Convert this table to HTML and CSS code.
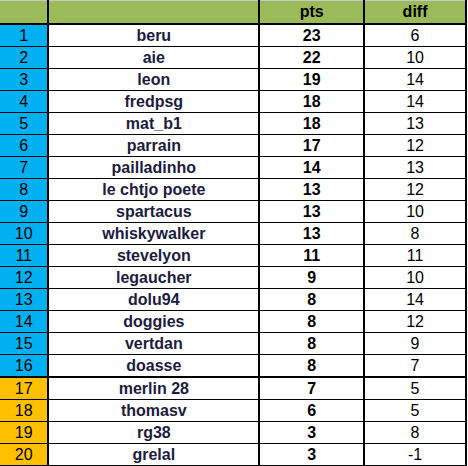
FILE: index.html
```html
<!DOCTYPE html>
<html>
<head>
<meta charset="utf-8">
<link rel="stylesheet" href="styles.css">
</head>
<body>
<table class="standings">
<thead>
<tr><th class="rank"></th><th class="name"></th><th class="pts">pts</th><th class="diff">diff</th></tr>
</thead>
<tbody>
<tr class="blue"><td class="rank">1</td><td class="name">beru</td><td class="pts">23</td><td class="diff">6</td></tr>
<tr class="blue"><td class="rank">2</td><td class="name">aie</td><td class="pts">22</td><td class="diff">10</td></tr>
<tr class="blue"><td class="rank">3</td><td class="name">leon</td><td class="pts">19</td><td class="diff">14</td></tr>
<tr class="blue"><td class="rank">4</td><td class="name">fredpsg</td><td class="pts">18</td><td class="diff">14</td></tr>
<tr class="blue"><td class="rank">5</td><td class="name">mat_b1</td><td class="pts">18</td><td class="diff">13</td></tr>
<tr class="blue"><td class="rank">6</td><td class="name">parrain</td><td class="pts">17</td><td class="diff">12</td></tr>
<tr class="blue"><td class="rank">7</td><td class="name">pailladinho</td><td class="pts">14</td><td class="diff">13</td></tr>
<tr class="blue"><td class="rank">8</td><td class="name">le chtjo poete</td><td class="pts">13</td><td class="diff">12</td></tr>
<tr class="blue"><td class="rank">9</td><td class="name">spartacus</td><td class="pts">13</td><td class="diff">10</td></tr>
<tr class="blue"><td class="rank">10</td><td class="name">whiskywalker</td><td class="pts">13</td><td class="diff">8</td></tr>
<tr class="blue"><td class="rank">11</td><td class="name">stevelyon</td><td class="pts">11</td><td class="diff">11</td></tr>
<tr class="blue"><td class="rank">12</td><td class="name">legaucher</td><td class="pts">9</td><td class="diff">10</td></tr>
<tr class="blue"><td class="rank">13</td><td class="name">dolu94</td><td class="pts">8</td><td class="diff">14</td></tr>
<tr class="blue"><td class="rank">14</td><td class="name">doggies</td><td class="pts">8</td><td class="diff">12</td></tr>
<tr class="blue"><td class="rank">15</td><td class="name">vertdan</td><td class="pts">8</td><td class="diff">9</td></tr>
<tr class="blue last-blue"><td class="rank">16</td><td class="name">doasse</td><td class="pts">8</td><td class="diff">7</td></tr>
<tr class="orange"><td class="rank">17</td><td class="name">merlin 28</td><td class="pts">7</td><td class="diff">5</td></tr>
<tr class="orange"><td class="rank">18</td><td class="name">thomasv</td><td class="pts">6</td><td class="diff">5</td></tr>
<tr class="orange"><td class="rank">19</td><td class="name">rg38</td><td class="pts">3</td><td class="diff">8</td></tr>
<tr class="orange"><td class="rank">20</td><td class="name">grelal</td><td class="pts">3</td><td class="diff">-1</td></tr>
</tbody>
</table>
</body>
</html>
```
FILE: styles.css
```css
html, body {
  margin: 0;
  padding: 0;
  background: #ffffff;
}

.standings {
  border-collapse: collapse;
  border-top: 1px solid #c8c8c8;
  font-family: "Liberation Sans", Arial, sans-serif;
  font-size: 16px;
  table-layout: fixed;
  width: 467px;
}

.standings th,
.standings td {
  padding: 0;
  text-align: center;
  line-height: 18px;
  height: 21px;
  border-bottom: 1px solid #000000;
  border-right: 2px solid #000000;
  overflow: hidden;
  white-space: nowrap;
}

.standings th {
  background: #9bbb59;
  font-weight: bold;
  color: #000000;
  height: 22px;
  border-bottom: 2px solid #000000;
}

.standings .rank { width: 47px; }
.standings .name { width: 207px; }
.standings .pts { width: 102px; }
.standings .diff { width: 99px; }

.standings td.rank {
  font-weight: normal;
  color: #000000;
}

.standings tr.blue td.rank { background: #00b0f0; }
.standings tr.orange td.rank { background: #ffc000; }

.standings td.name {
  font-weight: bold;
  color: #1c1c40;
}

.standings td.pts {
  font-weight: bold;
  color: #000000;
}

.standings td.diff {
  font-weight: normal;
  color: #000000;
}

.standings tr.last-blue td {
  border-bottom: 2px solid #000000;
}
```
